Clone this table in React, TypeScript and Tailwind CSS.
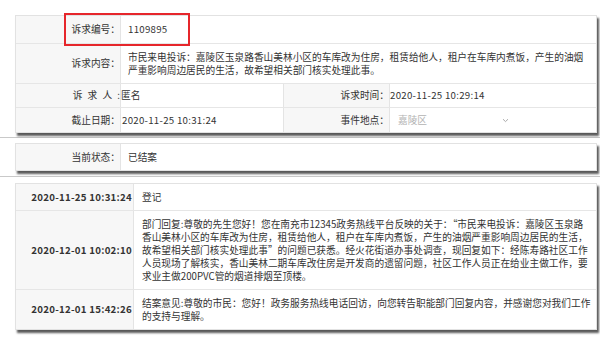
import React from "react";

const Chevron = () => (
  <svg width="7" height="5" viewBox="0 0 7 5" className="shrink-0">
    <path d="M1 1.2 L3.5 3.6 L6 1.2" fill="none" stroke="#a0a0a0" strokeWidth="0.9" />
  </svg>
);

function Lines({ lines }: { lines: string[] }) {
  return (
    <div className="flex flex-col">
      {lines.map((l, i) => (
        <span key={i} className="whitespace-nowrap">
          {l}
        </span>
      ))}
    </div>
  );
}

export default function App() {
  const label = "shrink-0 bg-[#f7f7f7] border-r border-[#e4e4e4] flex items-center justify-end";
  return (
    <div className="relative w-[600px] h-[337px] overflow-hidden bg-white text-[9.7px] leading-[13px] text-[#333] font-['Noto_Sans_CJK_SC','Microsoft_YaHei',sans-serif]">
      {/* Section 1 */}
      <div className="pt-[15px] pb-[4px] border-b border-[#c9c9c9]">
        <div className="ml-[15px] w-[582px] border border-[#e2e2e2] bg-white shadow-[2px_3px_2px_rgba(0,0,0,0.65)]">
          <div className="flex h-[28px] border-b border-[#e6e6e6]">
            <div className={`${label} w-[105px]`}>诉求编号：</div>
            <div className="flex items-center pl-[7px] tracking-[0.25px]">1109895</div>
          </div>
          <div className="flex h-[40px] border-b border-[#e6e6e6]">
            <div className={`${label} w-[105px]`}>诉求内容：</div>
            <div className="flex items-center pl-[7px]">
              <Lines
                lines={[
                  "市民来电投诉：嘉陵区玉泉路香山美林小区的车库改为住房，租赁给他人，租户在车库内煮饭，产生的油烟",
                  "严重影响周边居民的生活，故希望相关部门核实处理此事。",
                ]}
              />
            </div>
          </div>
          <div className="flex h-[24px] border-b border-[#e6e6e6]">
            <div className={`${label} w-[105px] [word-spacing:3px]`}>诉 求 人 :</div>
            <div className="w-[163px] shrink-0 border-r border-[#e4e4e4] flex items-center">匿名</div>
            <div className={`${label} w-[106px]`}>诉求时间：</div>
            <div className="flex items-center tracking-[0.27px]">2020-11-25 10:29:14</div>
          </div>
          <div className="flex h-[24px]">
            <div className={`${label} w-[105px]`}>截止日期：</div>
            <div className="w-[163px] shrink-0 border-r border-[#e4e4e4] flex items-center pl-[1px] tracking-[0.27px]">2020-11-25 10:31:24</div>
            <div className={`${label} w-[106px]`}>事件地点：</div>
            <div className="flex items-center">
              <div className="flex items-center justify-between w-[126px] pl-[8px] pr-[7px] text-[#b3b3b3]">
                <span>嘉陵区</span>
                <Chevron />
              </div>
            </div>
          </div>
        </div>
      </div>

      {/* Section 2 */}
      <div className="pt-[5px] pb-[5px] border-b border-[#c9c9c9]">
        <div className="ml-[15px] w-[582px] border border-[#e2e2e2] bg-white shadow-[2px_3px_2px_rgba(0,0,0,0.65)]">
          <div className="flex h-[26px]">
            <div className={`${label} w-[105px]`}>当前状态：</div>
            <div className="flex items-center pl-[7px]">已结案</div>
          </div>
        </div>
      </div>

      {/* Section 3 */}
      <div className="pt-[6px]">
        <div className="ml-[15px] w-[582px] border border-[#e2e2e2] bg-white shadow-[2px_3px_2px_rgba(0,0,0,0.65)]">
          <div className="flex h-[27px] border-b border-[#e6e6e6]">
            <div className={`${label} w-[118px] pr-[1px] font-bold tracking-[0.27px]`}>2020-11-25 10:31:24</div>
            <div className="flex items-center pl-[8px]">登记</div>
          </div>
          <div className="flex h-[79px] border-b border-[#e6e6e6]">
            <div className={`${label} w-[118px] pr-[1px] font-bold tracking-[0.27px]`}>2020-12-01 10:02:10</div>
            <div className="flex items-center pl-[8px]">
              <Lines
                lines={[
                  "部门回复:尊敬的先生您好！您在南充市12345政务热线平台反映的关于：“市民来电投诉：嘉陵区玉泉路",
                  "香山美林小区的车库改为住房，租赁给他人，租户在车库内煮饭，产生的油烟严重影响周边居民的生活，",
                  "故希望相关部门核实处理此事”的问题已获悉。经火花街道办事处调查，现回复如下：经陈寿路社区工作",
                  "人员现场了解核实，香山美林二期车库改住房是开发商的遗留问题，社区工作人员正在给业主做工作，要",
                  "求业主做200PVC管的烟道排烟至顶楼。",
                ]}
              />
            </div>
          </div>
          <div className="flex h-[39px]">
            <div className={`${label} w-[118px] pr-[1px] font-bold tracking-[0.27px]`}>2020-12-01 15:42:26</div>
            <div className="flex items-center pl-[8px]">
              <Lines
                lines={[
                  "结案意见:尊敬的市民：您好！政务服务热线电话回访，向您转告职能部门回复内容，并感谢您对我们工作",
                  "的支持与理解。",
                ]}
              />
            </div>
          </div>
        </div>
      </div>

      {/* Red highlight annotation */}
      <div className="absolute left-[64px] top-[13px] w-[126px] h-[33px] border-2 border-[#e6262b]" />
    </div>
  );
}
